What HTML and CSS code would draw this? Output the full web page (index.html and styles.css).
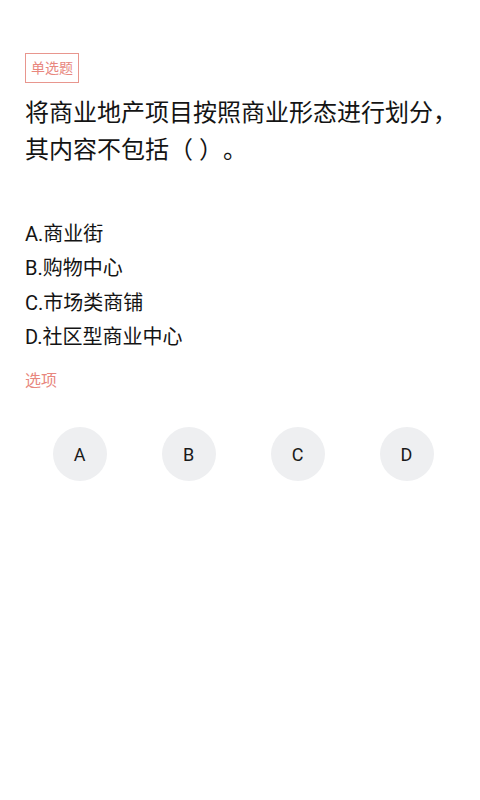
FILE: index.html
```html
<!DOCTYPE html>
<html lang="zh-CN">
<head>
<meta charset="utf-8">
<title>单选题</title>
<link rel="stylesheet" href="styles.css">
</head>
<body>
<main class="page">
  <div class="tag-row"><span class="tag">单选题</span></div>
  <h1 class="question">将商业地产项目按照商业形态进行划分，其内容不包括（ ）。</h1>
  <ul class="options">
    <li>A.商业街</li>
    <li>B.购物中心</li>
    <li>C.市场类商铺</li>
    <li>D.社区型商业中心</li>
  </ul>
  <div class="label">选项</div>
  <div class="choices">
    <div class="choice"><span class="circle">A</span></div>
    <div class="choice"><span class="circle">B</span></div>
    <div class="choice"><span class="circle">C</span></div>
    <div class="choice"><span class="circle">D</span></div>
  </div>
</main>
</body>
</html>
```
FILE: styles.css
```css
* { box-sizing: border-box; }
html, body {
  margin: 0;
  padding: 0;
  background: #ffffff;
}
body {
  font-family: Roboto, "Noto Sans CJK SC", sans-serif;
  color: #1a1a1a;
  text-spacing-trim: space-all;
  font-feature-settings: "chws" 0, "halt" 0;
}
.page {
  padding: 53px 19px 0 25px;
}
.tag-row {
  display: flex;
}
.tag {
  display: inline-block;
  border: 1px solid #e8968e;
  color: #e8877e;
  font-size: 14px;
  line-height: 20px;
  padding: 4px 5px;
}
.question {
  margin: 12px 0 0 0;
  font-size: 24px;
  font-weight: normal;
  line-height: 37px;
  color: #141414;
}
.options {
  list-style: none;
  margin: 48px 0 0 0;
  padding: 0;
}
.options li {
  font-size: 20px;
  line-height: 34.3px;
  color: #141414;
}
.label {
  margin-top: 16px;
  font-size: 16px;
  line-height: 22px;
  color: #e8877e;
}
.choices {
  display: grid;
  grid-template-columns: repeat(4, 1fr);
  margin-top: 35px;
}
.choice {
  display: flex;
  justify-content: center;
}
.circle {
  width: 54px;
  height: 54px;
  border-radius: 50%;
  background: #eeeff1;
  display: flex;
  align-items: center;
  justify-content: center;
  font-size: 18px;
  color: #1a1a1a;
}
```
